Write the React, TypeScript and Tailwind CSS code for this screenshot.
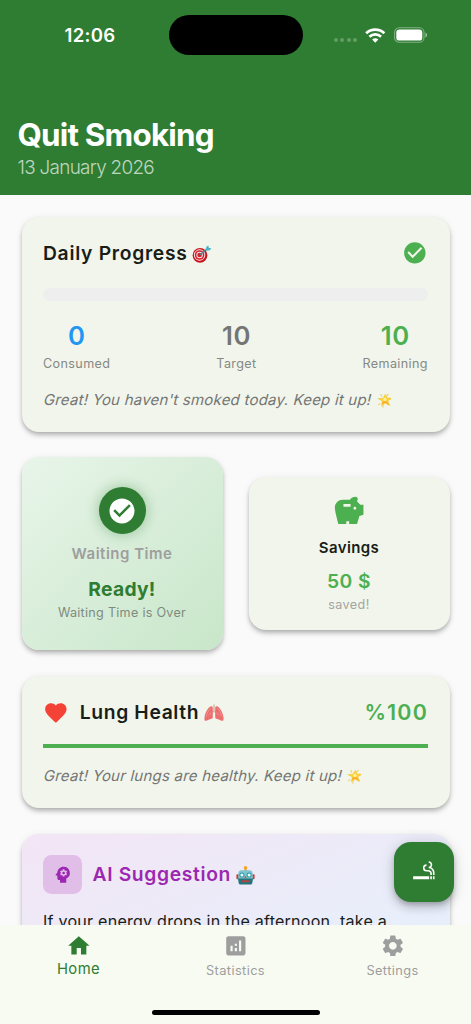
import React from "react";
import {
  MdAnalytics,
  MdCheckCircle,
  MdFavorite,
  MdHome,
  MdPsychology,
  MdSavings,
  MdSettings,
  MdSmokingRooms,
} from "react-icons/md";

const cardShadow =
  "shadow-[0_2px_4px_-1px_rgba(0,0,0,0.2),0_4px_5px_rgba(0,0,0,0.14),0_1px_8px_rgba(0,0,0,0.06)]";

interface IconProps {
  className?: string;
}

const TargetEmoji: React.FC<IconProps> = ({ className }) => (
  <svg viewBox="0 0 20 18" className={className}>
    <circle cx="8" cy="10.3" r="7.4" fill="#c9141f" />
    <circle cx="7.6" cy="10" r="5.7" fill="#f6e9e9" />
    <circle cx="7.6" cy="10" r="4.8" fill="#d3202b" />
    <circle cx="7.6" cy="10" r="3.2" fill="#f6e9e9" />
    <circle cx="7.6" cy="10" r="2.3" fill="#d3202b" />
    <path d="M8 9.8 15 4" stroke="#3e8f9e" strokeWidth="1.3" />
    <path d="M13.5 4.6 14.6 1.5 16.4.4l.3 2.4 2.7.8-1.6 1.7-3.2.4z" fill="#4cb3c4" />
  </svg>
);

const StarEmoji: React.FC<IconProps> = ({ className }) => (
  <svg viewBox="0 0 16 16" className={className}>
    <g stroke="#f3cf52" strokeWidth="1.1" strokeLinecap="round">
      <path d="M4.2 1.6l1 2M11.8 1.4l-1.6 2M14.6 6.4l-2 .4M1 6l2 .6M13.6 13l-1.4-1.6M6.2 15.2l.6-2M1.6 12.4l1.4-1" />
    </g>
    <path
      d="M8.8 1.4l1.6 3.9 4.5.3-3.4 2.9 1.3 4.5-4-2.3-4 2.8 1-4.8-3.7-2.6 4.6-.5z"
      fill="#fcd535"
      stroke="#f8c42c"
      strokeWidth=".7"
      strokeLinejoin="round"
    />
    <path d="M4.9 12.3l.7-3.1 2.9-1.2 3 1.2.9 3.3-3.7-2z" fill="#f9b02c" />
    <circle cx="8.5" cy="6.8" r="1.7" fill="#fff1a0" />
  </svg>
);

const LungsEmoji: React.FC<IconProps> = ({ className }) => (
  <svg viewBox="0 0 20 18" className={className}>
    <path
      d="M9.3.6h1.4v6l2.2 2-.7.9L10 8 7.8 9.5l-.7-.9 2.2-2z"
      fill="#cdb9a5"
    />
    <path
      d="M7.4 2.3C4.8 2.2 1 8.4.5 13.4c-.2 2.6.2 3.5 1.3 3.4 1.8-.1 3.5-1.6 5.9-2 .8-.2 1.1-.8 1.1-2V4.3c0-1.2-.5-2-1.4-2z"
      fill="#ec6f70"
    />
    <path
      d="M12.6 2.3c2.6-.1 6.4 6.1 6.9 11.1.2 2.6-.2 3.5-1.3 3.4-1.8-.1-3.5-1.6-5.9-2-.8-.2-1.1-.8-1.1-2V4.3c0-1.2.5-2 1.4-2z"
      fill="#ec6f70"
    />
    <path
      d="M6.8 4c-1.6 1-4 5-4.7 8.6M13.2 4c1.6 1 4 5 4.7 8.6M7.2 8.5 5 11.4M12.8 8.5l2.2 2.9"
      stroke="#f5918f"
      strokeWidth="1"
      fill="none"
    />
  </svg>
);

const RobotEmoji: React.FC<IconProps> = ({ className }) => (
  <svg viewBox="0 0 19 19" className={className}>
    <path d="M9.5 2v3" stroke="#b98a2c" strokeWidth="1.6" />
    <circle cx="9.5" cy="1.9" r="1.8" fill="#f5a623" />
    <rect x=".4" y="8.3" width="2.6" height="5" rx="1" fill="#d33a35" />
    <rect x="16" y="8.3" width="2.6" height="5" rx="1" fill="#d33a35" />
    <path
      d="M5.3 4.2h8.4c2 0 3 1.4 3 4l.2 5.4H2.1l.2-5.4c0-2.6 1-4 3-4z"
      fill="#7fc4ce"
    />
    <path d="M2 12.6h15l-.6 4c-.2 1.4-.8 2-2 2H4.6c-1.2 0-1.8-.6-2-2z" fill="#23757f" />
    <circle cx="5.9" cy="8.9" r="2.5" fill="#2b99a8" />
    <circle cx="13.1" cy="8.9" r="2.5" fill="#2b99a8" />
    <circle cx="5.9" cy="8.9" r="1.5" fill="#e9ffff" />
    <circle cx="13.1" cy="8.9" r="1.5" fill="#e9ffff" />
    <path d="M9.5 9.7l1.2 2.4H8.3z" fill="#e0443c" />
    <rect x="5.6" y="14.2" width="7.8" height="2" rx="1" fill="#b5453c" />
  </svg>
);

const StatusBar = () => (
  <div className="flex h-[70px] items-center pl-[64.5px] text-white">
    <span className="w-[104px] pt-[2px] text-[18.6px] font-semibold tracking-[0.3px]">
      12:06
    </span>
    <div className="h-[39.5px] w-[134px] rounded-full bg-black" />
    <div className="ml-[31.5px] mt-[10px] flex gap-[2.3px]">
      {[0, 1, 2, 3].map((dot) => (
        <span key={dot} className="size-[4px] rounded-full bg-white/25" />
      ))}
    </div>
    <svg viewBox="0 0 20 15" className="ml-[8.5px] h-[15px] w-[20.5px]">
      <g fill="none" stroke="#fff" strokeWidth="2.7">
        <path d="M.9 5.3a13 13 0 0 1 18.2 0" />
        <path d="M4.2 8.7a8.3 8.3 0 0 1 11.6 0" />
      </g>
      <path d="M10 14.8 6.9 11.6a4.5 4.5 0 0 1 6.2 0z" fill="#fff" />
    </svg>
    <svg viewBox="0 0 34 16" className="ml-[8px] h-[16px] w-[34px]">
      <rect
        x=".6"
        y=".7"
        width="29.4"
        height="14.6"
        rx="4.6"
        fill="none"
        stroke="#fff"
        strokeOpacity=".4"
        strokeWidth="1.1"
      />
      <rect x="2.3" y="2.4" width="26" height="11.2" rx="3.2" fill="#fff" />
      <path d="M31.4 5.5c2.3.7 2.3 4.3 0 5z" fill="#fff" fillOpacity=".5" />
    </svg>
  </div>
);

interface StatProps {
  value: string;
  label: string;
  color: string;
}

const stats: StatProps[] = [
  { value: "0", label: "Consumed", color: "text-[#2196f3]" },
  { value: "10", label: "Target", color: "text-[#757575]" },
  { value: "10", label: "Remaining", color: "text-[#4caf50]" },
];

interface MessageProps {
  className: string;
  text: string;
}

const Message: React.FC<MessageProps> = ({ className, text }) => (
  <p
    className={`flex items-center pl-[1px] text-[15px] leading-[22px] text-[#757575] ${className}`}
  >
    <span className="inline-block -skew-x-[14deg] tracking-[0.22px]">
      {text}
    </span>
    <StarEmoji className="ml-[5px] size-[15px]" />
  </p>
);

const DailyProgress = () => (
  <section
    className={`h-[215px] shrink-0 rounded-[17px] bg-[#f1f5eb] px-[21.5px] pt-[23px] ${cardShadow}`}
  >
    <div className="flex h-[26px] items-center">
      <h2 className="pt-[1px] text-[19.3px] font-semibold tracking-[0.7px] text-[#191d17]">
        Daily Progress
      </h2>
      <TargetEmoji className="ml-[4.5px] mt-[2px] h-[18px] w-[20px]" />
      <MdCheckCircle className="ml-auto size-[25.7px] text-[#4caf50]" />
    </div>
    <div className="mt-[22.5px] h-[13px] rounded-full bg-[#eeeeee]" />
    <div className="mt-[19px] flex justify-between text-center">
      {stats.map((stat) => (
        <div key={stat.label}>
          <p
            className={`text-[25.7px] leading-[32px] font-semibold tracking-[0.5px] ${stat.color}`}
          >
            {stat.value}
          </p>
          <p className="mt-[2px] text-[12.6px] leading-[20px] tracking-[0.38px] text-[#868983]">
            {stat.label}
          </p>
        </div>
      ))}
    </div>
    <Message
      className="mt-[15px]"
      text="Great! You haven't smoked today. Keep it up!"
    />
  </section>
);

const WaitingTime = () => (
  <section
    className={`flex h-[192.5px] w-[201px] flex-col items-center rounded-[17px] bg-linear-to-br from-[#e8f5e9] to-[#c8e6c9] pt-[30px] ${cardShadow}`}
  >
    <div className="flex size-[47px] items-center justify-center rounded-full bg-[#2e7d32] shadow-[0_0_12px_2px_rgba(46,125,50,0.3)]">
      <MdCheckCircle className="size-[30px] text-white" />
    </div>
    <p className="mt-[10px] text-[15px] leading-[20px] font-semibold tracking-[0.5px] text-[#9e9e9e]">
      Waiting Time
    </p>
    <p className="mt-[13px] text-[19.3px] leading-[24px] font-bold tracking-[0.25px] text-[#2e7d32]">
      Ready!
    </p>
    <p className="mt-[2.5px] text-[12.6px] leading-[18px] tracking-[0.28px] text-[#7f8a7f]">
      Waiting Time is Over
    </p>
  </section>
);

const Savings = () => (
  <section
    className={`flex h-[153px] w-[201px] flex-col items-center rounded-[17px] bg-[#f1f5eb] pt-[17px] ${cardShadow}`}
  >
    <MdSavings className="size-[34.3px] text-[#4caf50]" />
    <p className="mt-[10px] text-[15px] leading-[20px] font-semibold tracking-[0.4px] text-[#191d17]">
      Savings
    </p>
    <p className="mt-[11px] text-[19.3px] leading-[24px] font-semibold tracking-[0.5px] text-[#4caf50]">
      50 $
    </p>
    <p className="mt-[2.5px] text-[12.6px] leading-[18px] tracking-[0.4px] text-[#a3a5a0]">
      saved!
    </p>
  </section>
);

const LungHealth = () => (
  <section
    className={`mt-[0.5px] h-[132.5px] shrink-0 rounded-[17px] bg-[#f1f5eb] px-[21.5px] pt-[24px] ${cardShadow}`}
  >
    <div className="flex h-[26px] items-center">
      <MdFavorite className="size-[25.7px] text-[#f44336]" />
      <h2 className="ml-[11px] text-[19.3px] font-semibold tracking-[0.65px] text-[#191d17]">
        Lung Health
      </h2>
      <LungsEmoji className="ml-[5px] h-[18px] w-[20px]" />
      <span className="ml-auto text-[21.4px] font-semibold tracking-[1.2px] text-[#4caf50]">
        %100
      </span>
    </div>
    <div className="mt-[18px] h-[4.5px] bg-[#4caf50]" />
    <Message
      className="mt-[17px]"
      text="Great! Your lungs are healthy. Keep it up!"
    />
  </section>
);

const AiSuggestion = () => (
  <section
    className={`h-[170px] shrink-0 rounded-[17px] bg-linear-to-br from-[#f3e5f5] to-[#e3f2fd] px-[21.5px] pt-[21.5px] ${cardShadow}`}
  >
    <div className="flex items-center">
      <div className="flex size-[38.5px] items-center justify-center rounded-[8.5px] bg-[#e1bee7]">
        <MdPsychology className="size-[21.4px] text-[#9c27b0]" />
      </div>
      <h2 className="ml-[11px] pt-[1px] text-[19.3px] font-semibold tracking-[0.65px] text-[#9c27b0]">
        AI Suggestion
      </h2>
      <RobotEmoji className="ml-[5px] mt-[2px] size-[19px]" />
    </div>
    <p className="mt-[15px] text-[16.1px] leading-[25px] tracking-[0.22px] whitespace-nowrap text-[#191d17]">
      If your energy drops in the afternoon, take a
    </p>
  </section>
);

const BottomNav = () => (
  <nav className="flex h-[99px] shrink-0 flex-col items-center bg-[#f8fbf1]">
    <div className="grid w-full grid-cols-3 pt-[7.5px] text-center text-[12.8px] leading-[20px] tracking-[0.4px] text-[#9e9e9e]">
      <div className="flex flex-col items-center text-[#2e7d32]">
        <MdHome className="size-[25.7px]" />
        <span className="mt-[0.5px] text-[14.8px]">Home</span>
      </div>
      <div className="flex flex-col items-center">
        <MdAnalytics className="size-[25.7px]" />
        <span className="mt-[3px]">Statistics</span>
      </div>
      <div className="flex flex-col items-center">
        <MdSettings className="size-[25.7px]" />
        <span className="mt-[3px]">Settings</span>
      </div>
    </div>
    <div className="mt-auto mb-[9px] h-[5.5px] w-[168px] rounded-full bg-black" />
  </nav>
);

const App: React.FC = () => {
  return (
    <div className="relative flex h-[1024px] w-[471px] flex-col overflow-hidden bg-[#fafafa] font-['Inter','Liberation_Sans',sans-serif]">
      <header className="h-[195px] shrink-0 bg-[#2e7d32]">
        <StatusBar />
        <div className="pt-[45px] pl-[17.5px] text-white">
          <h1 className="text-[31.4px] leading-[40px] font-bold tracking-[-0.8px]">
            Quit Smoking
          </h1>
          <p className="mt-[0.5px] text-[18.9px] leading-[24px] font-light tracking-[-0.7px] text-white/70">
            13 January 2026
          </p>
        </div>
      </header>
      <main className="flex min-h-0 flex-1 flex-col gap-[25.5px] overflow-hidden px-[21.5px] pt-[21.5px]">
        <DailyProgress />
        <div className="flex shrink-0 items-center justify-between">
          <WaitingTime />
          <Savings />
        </div>
        <LungHealth />
        <AiSuggestion />
      </main>
      <BottomNav />
      <button className="absolute top-[841.5px] right-[17.5px] flex size-[60px] items-center justify-center rounded-[17px] bg-[#2e7d32] text-white shadow-[0_3px_5px_-1px_rgba(0,0,0,0.2),0_6px_10px_rgba(0,0,0,0.14),0_1px_16px_rgba(0,0,0,0.12)]">
        <MdSmokingRooms className="size-[25.7px]" />
      </button>
    </div>
  );
};

export default App;
